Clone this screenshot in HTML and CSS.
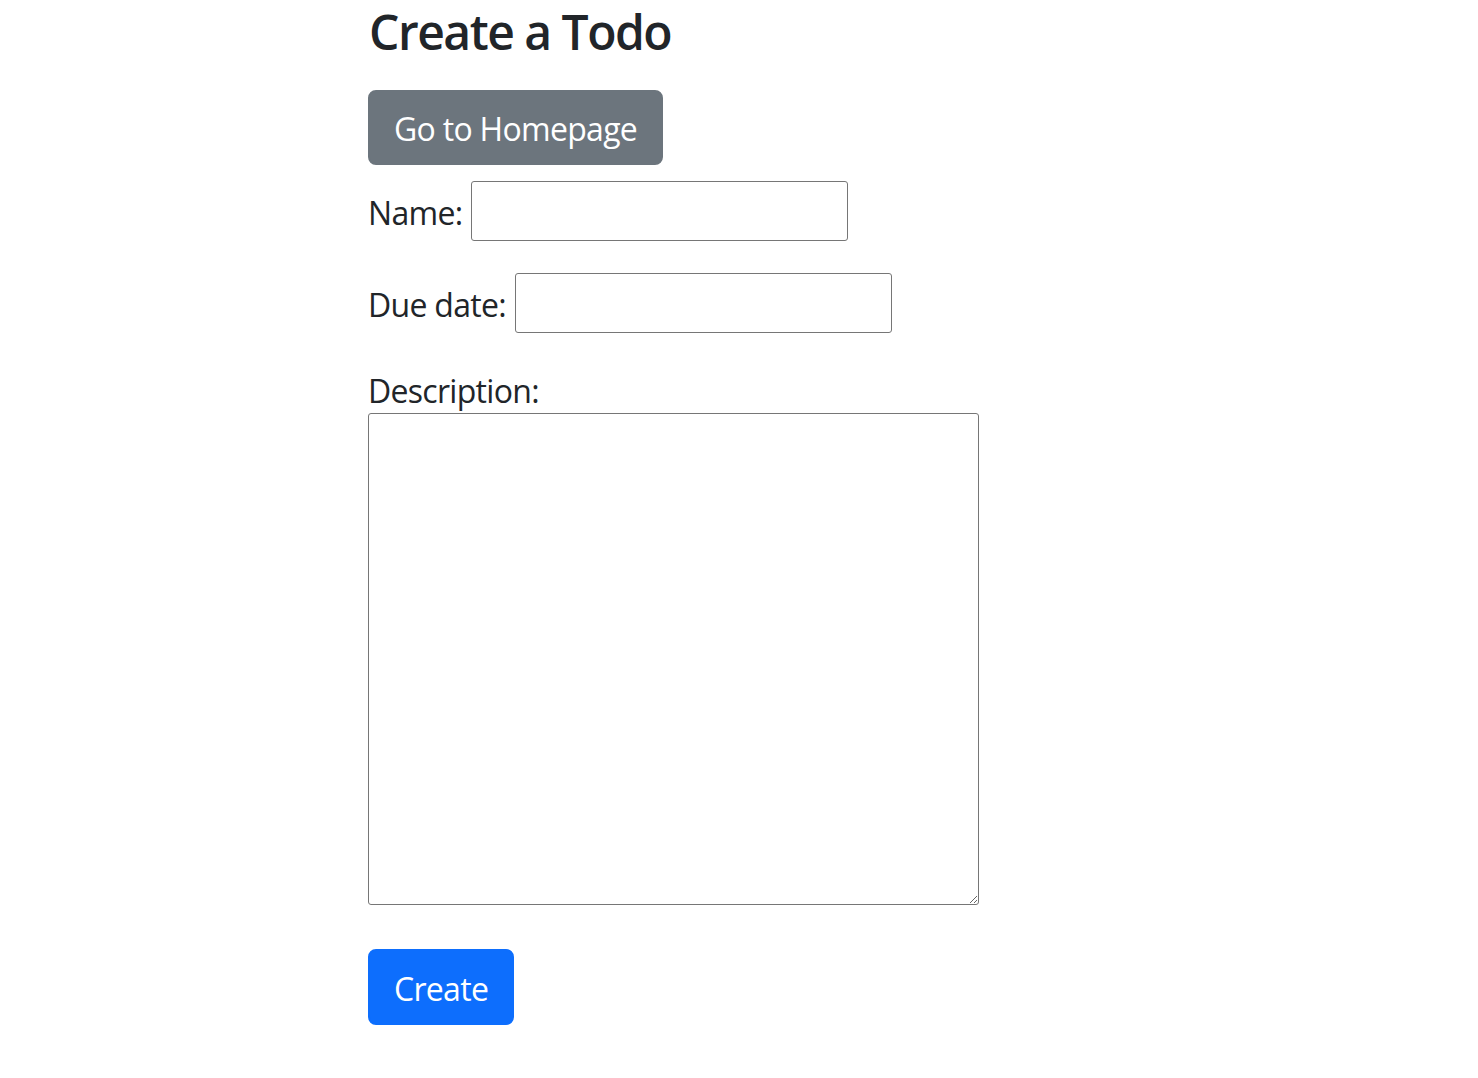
FILE: index.html
```html
<!DOCTYPE html>
<html lang="en">
<head>
<meta charset="utf-8">
<title>Create a Todo</title>
<link rel="stylesheet" href="styles.css">
</head>
<body>
<div class="page">
  <h1 class="title">Create a Todo</h1>
  <a class="btn btn-secondary" href="#">Go to Homepage</a>
  <form class="todo-form">
    <div class="field">
      <label class="label" for="name">Name:</label>
      <input class="input" id="name" type="text">
    </div>
    <div class="field">
      <label class="label" for="due">Due date:</label>
      <input class="input" id="due" type="text">
    </div>
    <div class="field-block">
      <label class="label" for="desc">Description:</label>
      <textarea class="textarea" id="desc"></textarea>
    </div>
    <button class="btn btn-primary" type="submit">Create</button>
  </form>
</div>
</body>
</html>
```

FILE: styles.css
```css
html, body {
  margin: 0;
  padding: 0;
  background: #ffffff;
}

body {
  font-family: "Open Sans", "Noto Sans", sans-serif;
  font-size: 32px;
  line-height: 48px;
  letter-spacing: -0.7px;
  color: #212529;
}

.page {
  padding-left: 368px;
  display: flex;
  flex-direction: column;
  align-items: flex-start;
}

.title {
  margin: 0 0 27px 1px;
  font-size: 48px;
  line-height: 63px;
  font-weight: 600;
  letter-spacing: -1.5px;
  color: #212529;
}

.btn {
  display: inline-block;
  box-sizing: border-box;
  font-family: inherit;
  font-size: 32px;
  line-height: 48px;
  letter-spacing: -0.7px;
  padding: 13px 24px 10px;
  border: 2px solid transparent;
  border-radius: 8px;
  text-decoration: none;
  cursor: pointer;
  color: #ffffff;
}

.btn-secondary {
  background: #6c757d;
  border-color: #6c757d;
}

.btn-primary {
  padding: 14px 24px 10px;
  background: #0d6efd;
  border-color: #0d6efd;
}

.todo-form {
  margin-top: 16px;
  display: flex;
  flex-direction: column;
  align-items: flex-start;
}

.field {
  display: flex;
  align-items: center;
  gap: 9px;
  margin-bottom: 32px;
}

.field .label {
  padding-top: 4px;
}

.input {
  box-sizing: border-box;
  width: 377px;
  height: 60px;
  border: 1px solid #767676;
  border-radius: 3px;
  padding: 2px 4px;
  font-family: inherit;
  font-size: 32px;
  background: #ffffff;
}

.field-block {
  display: flex;
  flex-direction: column;
  align-items: flex-start;
  margin-bottom: 44px;
}

.field-block .label {
  padding-top: 3px;
  line-height: 45px;
}

.textarea {
  display: block;
  box-sizing: border-box;
  width: 611px;
  height: 492px;
  border: 1px solid #767676;
  border-radius: 3px;
  padding: 4px;
  font-family: inherit;
  font-size: 32px;
  background: #ffffff;
}
```
